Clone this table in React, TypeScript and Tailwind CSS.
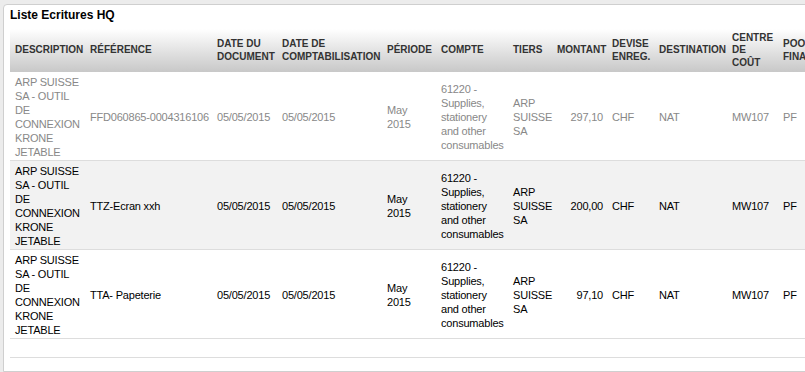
import React from "react";

type Row = {
  description: string;
  reference: string;
  dateDoc: string;
  dateCompta: string;
  periode: string;
  compte: string;
  tiers: string;
  montant: string;
  devise: string;
  destination: string;
  centre: string;
  pool: string;
};

const rows: Row[] = [
  {
    description: "ARP SUISSE SA - OUTIL DE CONNEXION KRONE JETABLE",
    reference: "FFD060865-0004316106",
    dateDoc: "05/05/2015",
    dateCompta: "05/05/2015",
    periode: "May 2015",
    compte: "61220 - Supplies, stationery and other consumables",
    tiers: "ARP SUISSE SA",
    montant: "297,10",
    devise: "CHF",
    destination: "NAT",
    centre: "MW107",
    pool: "PF",
  },
  {
    description: "ARP SUISSE SA - OUTIL DE CONNEXION KRONE JETABLE",
    reference: "TTZ-Ecran xxh",
    dateDoc: "05/05/2015",
    dateCompta: "05/05/2015",
    periode: "May 2015",
    compte: "61220 - Supplies, stationery and other consumables",
    tiers: "ARP SUISSE SA",
    montant: "200,00",
    devise: "CHF",
    destination: "NAT",
    centre: "MW107",
    pool: "PF",
  },
  {
    description: "ARP SUISSE SA - OUTIL DE CONNEXION KRONE JETABLE",
    reference: "TTA- Papeterie",
    dateDoc: "05/05/2015",
    dateCompta: "05/05/2015",
    periode: "May 2015",
    compte: "61220 - Supplies, stationery and other consumables",
    tiers: "ARP SUISSE SA",
    montant: "97,10",
    devise: "CHF",
    destination: "NAT",
    centre: "MW107",
    pool: "PF",
  },
];

const columns = [
  { label: "Description", width: "w-[75px]" },
  { label: "Référence", width: "w-[127px]" },
  { label: "Date du document", width: "w-[65px]" },
  { label: "Date de comptabilisation", width: "w-[105px]" },
  { label: "Période", width: "w-[54px]" },
  { label: "Compte", width: "w-[72px]" },
  { label: "Tiers", width: "w-[44px]" },
  { label: "Montant", width: "w-[55px]" },
  { label: "Devise enreg.", width: "w-[47px]" },
  { label: "Destination", width: "w-[73px]" },
  { label: "Centre de coût", width: "w-[51px]" },
  { label: "Pool finance", width: "w-[80px]" },
];

const td = "pl-[5px] pr-[3px] pt-[3px] pb-[1px] align-middle";

export default function App() {
  return (
    <div className="h-screen w-full overflow-hidden bg-[#ececec] pt-[4px] pl-[3px] font-['Liberation_Sans',Arial,sans-serif]">
      <div className="h-full w-[900px] rounded-tl-[4px] border border-[#cfcfcf] bg-white pl-[6px] pt-[3px]">
        <h1 className="text-[12px] leading-[15px] font-bold text-black">
          Liste Ecritures HQ
        </h1>
        <table className="mt-[6px] w-[848px] table-fixed border-collapse">
          <thead>
            <tr className="h-[43px]">
              {columns.map((col) => (
                <th
                  key={col.label}
                  className={`${col.width} bg-linear-to-b from-white to-[#c8c8c8] pl-[5px] pr-[2px] py-[2px] text-left align-middle text-[10px] leading-[12.5px] font-bold uppercase text-[#333]`}
                >
                  {col.label}
                </th>
              ))}
            </tr>
          </thead>
          <tbody className="text-[11px] leading-[14px] tracking-[-0.2px]">
            {rows.map((r, i) => (
              <tr
                key={i}
                className={`border-b border-[#dddddd] ${
                  i === 0 ? "text-[#888888]" : "text-black"
                } ${i === 1 ? "bg-[#f2f2f2]" : "bg-white"}`}
              >
                <td className={td}>{r.description}</td>
                <td className={`${td} whitespace-nowrap`}>{r.reference}</td>
                <td className={`${td} whitespace-nowrap`}>{r.dateDoc}</td>
                <td className={`${td} whitespace-nowrap`}>{r.dateCompta}</td>
                <td className="pl-[5px] pr-[5px] pt-[3px] pb-[1px] align-middle">{r.periode}</td>
                <td className={td}>{r.compte}</td>
                <td className={td}>{r.tiers}</td>
                <td className="pl-[5px] pr-[4px] pt-[3px] pb-[1px] text-right align-middle">
                  {r.montant}
                </td>
                <td className={td}>{r.devise}</td>
                <td className={td}>{r.destination}</td>
                <td className={td}>{r.centre}</td>
                <td className={td}>{r.pool}</td>
              </tr>
            ))}
            <tr className="h-[19px] border-b border-[#dddddd]">
              <td colSpan={12}></td>
            </tr>
          </tbody>
        </table>
      </div>
    </div>
  );
}
